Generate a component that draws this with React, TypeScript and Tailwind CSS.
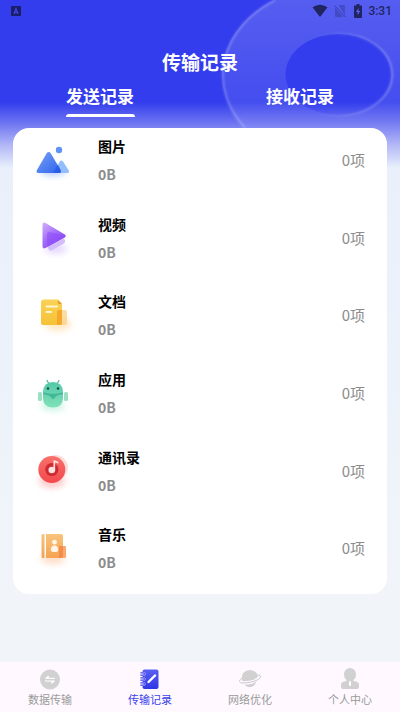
import { useState } from "react";

const ImageIcon = () => (
  <svg viewBox="0 0 48 48" className="size-12 shrink-0" aria-hidden="true">
    <defs>
      <linearGradient id="imgA" x1="0" y1="0" x2="1" y2="1">
        <stop offset="0" stopColor="#79a2f6" />
        <stop offset="1" stopColor="#2c62ec" />
      </linearGradient>
      <filter id="soft" x="-50%" y="-50%" width="200%" height="200%">
        <feGaussianBlur stdDeviation="3" />
      </filter>
    </defs>
    <ellipse cx="24" cy="35" rx="13" ry="5" fill="#5b8cf8" opacity=".4" filter="url(#soft)" />
    <circle cx="30" cy="14" r="3.200" fill="#5f92f6" />
    <path d="M30.800 25.500q1.500-2.200 3.200 0l5.700 9q1 2.500-1.200 2.500H25z" fill="#93bdfb" />
    <path d="M17.500 17.500q2.200-2.800 4.400 0L31.500 34q1.300 3-1.500 3H9.500q-3 0-1.500-3z" fill="url(#imgA)" />
    <path d="M29 28.500l-2.500 4q-2 3-2 4.500H30q2.800 0 1.500-3z" fill="#2458e4" opacity=".65" />
  </svg>
);

const VideoIcon = () => (
  <svg viewBox="0 0 48 48" className="size-12 shrink-0" aria-hidden="true">
    <defs>
      <linearGradient id="vidA" x1="0" y1="0" x2=".7" y2="1">
        <stop offset="0" stopColor="#d0b0fa" />
        <stop offset=".55" stopColor="#a26af8" />
        <stop offset="1" stopColor="#8a4cf7" />
      </linearGradient>
    </defs>
    <ellipse cx="27" cy="35" rx="11" ry="5" fill="#a674fa" opacity=".28" filter="url(#soft)" />
    <path d="M19 33l15-8q2-.5 2 1.500v1q0 1.500-2 2.500L23 36.200q-2.500 1.200-4-2z" fill="#d2bcfc" />
    <path d="M13.500 11q0-3.500 3-2l19 11.300q2.500 1.700 0 3.400L16.500 34q-3 1.500-3-2z" fill="url(#vidA)" />
    <path d="M18 21q0-4 3-2.700L35.500 21q1.500 1 0 2.200L20.500 32q-2.500 1-2.500-2z" fill="#8a45fa" opacity=".5" />
  </svg>
);

const DocumentIcon = () => (
  <svg viewBox="0 0 48 48" className="size-12 shrink-0" aria-hidden="true">
    <defs>
      <linearGradient id="docA" x1="0" y1="0" x2="0" y2="1">
        <stop offset="0" stopColor="#fad257" />
        <stop offset="1" stopColor="#f6c136" />
      </linearGradient>
    </defs>
    <ellipse cx="29" cy="33" rx="13" ry="7" fill="#fdb94d" opacity=".32" filter="url(#soft)" />
    <path d="M15 8.500h14l4 4V32q0 2-2 2H14q-2 0-2-2V11.500q0-3 3-3z" fill="url(#docA)" />
    <path d="M29 9.500l3.500 3.500H31q-2 0-2-2z" fill="#e98918" />
    <rect x="28" y="19" width="10" height="15" rx="2" fill="#fbcf80" opacity=".7" />
    <path d="M30 19h3v13q0 2-2 2h-3V21q0-2 2-2z" fill="#f5a82a" />
    <path d="M17.500 15.500h10.500M17.500 21h4.500" stroke="#fff5cf" strokeWidth="2" strokeLinecap="round" />
  </svg>
);

const AppIcon = () => (
  <svg viewBox="0 0 48 48" className="size-12 shrink-0" aria-hidden="true">
    <defs>
      <linearGradient id="appA" x1="0" y1="0" x2="0" y2="1">
        <stop offset="0" stopColor="#53c7a8" />
        <stop offset="1" stopColor="#80e2b8" />
      </linearGradient>
    </defs>
    <ellipse cx="24" cy="37" rx="12" ry="5" fill="#6fe0b5" opacity=".35" filter="url(#soft)" />
    <path d="M19.500 14l-1.500-2.500M28.500 14l1.500-2.500" stroke="#4fb99a" strokeWidth="1.300" strokeLinecap="round" />
    <rect x="9" y="23" width="4" height="9" rx="1.500" fill="#9cdfc4" />
    <rect x="35" y="23" width="4" height="9" rx="1.500" fill="#9cdfc4" />
    <path d="M14 23q.5-10 10-10t10 10v6q0 9.500-10 9.500T14 29z" fill="url(#appA)" />
    <path d="M14 23.500q10 2.500 20 0V25l-6 1.500-4 4-4-4-6-1.500z" fill="#30ab8b" opacity=".7" />
    <circle cx="19" cy="19.500" r="1.200" fill="#15483e" />
    <circle cx="29" cy="19.500" r="1.200" fill="#15483e" />
  </svg>
);

const DiscIcon = () => (
  <svg viewBox="0 0 48 48" className="size-12 shrink-0" aria-hidden="true">
    <defs>
      <linearGradient id="discA" x1="0" y1="0" x2="0" y2="1">
        <stop offset="0" stopColor="#f8716c" />
        <stop offset="1" stopColor="#f3494c" />
      </linearGradient>
    </defs>
    <ellipse cx="23" cy="34" rx="13" ry="7" fill="#fb6c68" opacity=".35" filter="url(#soft)" />
    <circle cx="26.500" cy="20.500" r="12.500" fill="#fddedd" />
    <circle cx="22.800" cy="22.500" r="13.500" fill="url(#discA)" />
    <circle cx="22.800" cy="22.500" r="6.600" fill="#cf2a31" />
    <circle cx="22.800" cy="23" r="3.300" fill="#ffe3e1" />
    <path d="M25.300 23.500V14l3.500 1.500" stroke="#ffe3e1" strokeWidth="1.700" fill="none" strokeLinejoin="round" strokeLinecap="round" />
  </svg>
);

const ContactIcon = () => (
  <svg viewBox="0 0 48 48" className="size-12 shrink-0" aria-hidden="true">
    <defs>
      <linearGradient id="conA" x1="0" y1="0" x2="0" y2="1">
        <stop offset="0" stopColor="#f8c47d" />
        <stop offset="1" stopColor="#f5a351" />
      </linearGradient>
    </defs>
    <ellipse cx="24" cy="35" rx="12" ry="5" fill="#fa9e5b" opacity=".35" filter="url(#soft)" />
    <path d="M14 10h1.500v24H14q-1.500 0-1.500-1.500v-21Q12.500 10 14 10z" fill="url(#conA)" />
    <path d="M17 10h15q2 0 2 2v20q0 2-2 2H17z" fill="url(#conA)" />
    <circle cx="25.500" cy="18.200" r="2.400" fill="#fff4e6" />
    <path d="M21.800 26q0-4.500 3.700-4.500t3.700 4.500q0 2-3.700 2t-3.700-2z" fill="#fff4e6" />
    <rect x="30" y="22" width="7" height="12" rx="1" fill="#f9aa72" />
    <path d="M30 22h4v10q0 2-2 2h-2z" fill="#f58c4a" />
  </svg>
);

const RECORDS = [
  { name: "图片", icon: ImageIcon },
  { name: "视频", icon: VideoIcon },
  { name: "文档", icon: DocumentIcon },
  { name: "应用", icon: AppIcon },
  { name: "通讯录", icon: DiscIcon },
  { name: "音乐", icon: ContactIcon },
];

const TransferIcon = () => (
  <svg viewBox="0 0 24 24" className="size-6" aria-hidden="true">
    <circle cx="12" cy="12.500" r="10" fill="#d1d1d1" />
    <path d="M17 11.300H7.500L10.300 9v2M7 14h9.500l-2.800 2.300v-2" fill="#fff" stroke="#fff" strokeWidth="1" strokeLinejoin="round" />
  </svg>
);

const NotebookIcon = () => (
  <svg viewBox="0 0 24 24" className="size-6" aria-hidden="true">
    <defs>
      <linearGradient id="noteA" x1="0" y1="0" x2="0" y2="1">
        <stop offset="0" stopColor="#5a5ff2" />
        <stop offset="1" stopColor="#3036e6" />
      </linearGradient>
    </defs>
    <rect x="4.500" y="2.500" width="16" height="19.500" rx="2" fill="url(#noteA)" />
    {[7, 12, 17].map((y) => (
      <g key={y}>
        <rect x="1.500" y={y - 1.8} width="6" height="3.600" rx="1.800" fill="#fff9ff" />
        <path d={`M2.800 ${y - 1.2}h2.400q1.200 0 1.200 1.200t-1.200 1.200H2.800`} fill="none" stroke="#4549ec" strokeWidth="1.200" strokeLinecap="round" />
      </g>
    ))}
    <path d="M10.500 15l6.500-6.500" stroke="#fff" strokeWidth="2.400" strokeLinecap="round" />
  </svg>
);

const PlanetIcon = () => (
  <svg viewBox="0 0 24 24" className="size-6" aria-hidden="true">
    <path d="M4.200 14q-1.800-10.500 7.800-11 6.800.3 8 6.500-1.500 2.500-7.500 4-5.500 1.300-8.300.5z" fill="#d1d1d1" />
    <path d="M6.300 17.700q8-.2 12.200-3.400-2.200 6-7 5.900-3-.2-5.200-2.500z" fill="#d1d1d1" />
    <path d="M20.300 8q2.400 0 2.400 1.500 0 3-8.700 5.300-12.500 2.800-12.500-.5 0-1.500 2.200-3" fill="none" stroke="#c8c8c8" strokeWidth="1" strokeLinecap="round" />
  </svg>
);

const PersonIcon = () => (
  <svg viewBox="0 0 24 24" className="size-6" aria-hidden="true">
    <path d="M12 1a6 6 0 0 1 6 6.500q0 3.500-2.500 5.500l.2 1 3 .7q2.300.8 2.300 2.800V20q0 2-2 2H5q-2 0-2-2v-2.500q0-2 2.300-2.800l3-.7.2-1Q6 11 6 7.500A6 6 0 0 1 12 1z" fill="#d1d1d1" />
    <path d="M11.300 14h1.400l.5 4-1.200 1.200-1.200-1.200z" fill="#fff" />
  </svg>
);

const NAV_ITEMS = [
  { label: "数据传输", icon: TransferIcon },
  { label: "传输记录", icon: NotebookIcon },
  { label: "网络优化", icon: PlanetIcon },
  { label: "个人中心", icon: PersonIcon },
];

function StatusBar() {
  return (
    <div className="flex h-[22px] items-center justify-between pr-2 pl-[11px] text-[#20255f]">
      <svg viewBox="0 0 10 10" className="size-2.5" aria-hidden="true">
        <rect width="10" height="10" rx="1" fill="#1b1f66" />
        <path d="M3 8l2-5.500L7 8M3.800 6.300h2.400" stroke="#3b45e8" strokeWidth="1.200" fill="none" />
      </svg>
      <div className="flex items-center">
        <svg viewBox="0 0 16 14" className="mr-1.5 h-3.5 w-4" aria-hidden="true">
          <path d="M8 13L.5 3.300Q8-2 15.500 3.300z" fill="currentColor" />
        </svg>
        <svg viewBox="0 0 12 14" className="mr-2 h-3.5 w-3" aria-hidden="true">
          <path d="M4.500 1H11v10zM1 3.500L9.500 13H2q-1 0-1-1z" fill="currentColor" opacity=".3" />
          <path d="M.5 1.500l11 11.500" stroke="currentColor" strokeWidth="1" opacity=".5" />
        </svg>
        <svg viewBox="0 0 8 14" className="mr-1.5 h-3.5 w-2" aria-hidden="true">
          <path d="M2.500 0h3v1.500H8V13q0 1-1 1H1q-1 0-1-1V1.500h2.500z" fill="currentColor" />
          <path d="M4.600 4L2 8h1.600v3.200L6.200 7H4.600z" fill="#5a62f2" />
        </svg>
        <span className="font-[Roboto,sans-serif] text-xs font-medium">3:31</span>
      </div>
    </div>
  );
}

function HeaderRings() {
  return (
    <svg viewBox="0 0 180 170" className="absolute top-0 right-0 h-[170px] w-[180px]" aria-hidden="true">
      <defs>
        <linearGradient id="ringFill" x1="0" y1="0" x2="0" y2="1">
          <stop offset="0" stopColor="#fff" stopOpacity=".18" />
          <stop offset=".7" stopColor="#fff" stopOpacity=".08" />
          <stop offset="1" stopColor="#fff" stopOpacity="0" />
        </linearGradient>
        <linearGradient id="ringEdge" x1="0" y1="0" x2="1" y2="0">
          <stop offset=".3" stopColor="#fff" stopOpacity="0" />
          <stop offset="1" stopColor="#fff" stopOpacity=".28" />
        </linearGradient>
        <filter id="edgeBlur">
          <feGaussianBlur stdDeviation=".8" />
        </filter>
      </defs>
      <path
        d="M2 75a116 90 0 1 0 232 0a116 90 0 1 0-232 0zM65.500 74.500a53 40.500 0 1 0 106 0a53 40.500 0 1 0-106 0z"
        fillRule="evenodd"
        fill="url(#ringFill)"
      />
      <path d="M55 0A116 90 0 0 0 25 128" fill="none" stroke="#fff" strokeWidth="2" opacity=".24" filter="url(#edgeBlur)" />
      <ellipse cx="118.500" cy="74.500" rx="53.500" ry="41" fill="none" stroke="url(#ringEdge)" strokeWidth="2" filter="url(#edgeBlur)" />
    </svg>
  );
}

export default function App() {
  const [tab, setTab] = useState("发送记录");

  return (
    <div className="relative flex min-h-screen flex-col bg-[linear-gradient(180deg,#333ded_0px,#333ded_102px,#6a71f1_122px,#b1b7f6_145px,#e9f0fb_168px,#f1f5fa_600px)] font-['Noto_Sans_CJK_SC',sans-serif]">
      <HeaderRings />
      <header className="relative flex h-32 flex-col text-white">
        <StatusBar />
        <h1 className="mt-6 text-center text-[19px] leading-8 font-bold">传输记录</h1>
        <div className="grid grid-cols-2" role="tablist">
          {["发送记录", "接收记录"].map((name) => (
            <button
              key={name}
              role="tab"
              aria-selected={tab === name}
              onClick={() => setTab(name)}
              className="flex flex-col items-center text-[17px] leading-9 font-bold"
            >
              {name}
              <span className={`h-[3px] w-[69px] rounded-t-sm ${tab === name ? "bg-white" : "bg-transparent"}`} />
            </button>
          ))}
        </div>
      </header>

      <main className="relative mx-[13px] mb-[68px] flex flex-1 flex-col rounded-2xl bg-white">
        {RECORDS.map(({ name, icon: Icon }) => (
          <div key={name} className="flex flex-1 items-start pr-[22px] pl-4">
            <div className="pt-2">
              <Icon />
            </div>
            <div className="ml-[21px] flex-1 pt-1.5">
              <h2 className="text-sm leading-6 font-bold text-black">{name}</h2>
              <p className="mt-1 text-sm leading-6 font-bold text-[#8c8c8c]">0B</p>
            </div>
            <span className="pt-5 text-[15px] leading-6 text-[#8c8c8c]">0项</span>
          </div>
        ))}
      </main>

      <nav className="grid grid-cols-4 bg-[#fff9ff] py-[5px]">
        {NAV_ITEMS.map(({ label, icon: Icon }) => (
          <a
            key={label}
            href="#"
            className={`flex flex-col items-center text-[11px] leading-4 ${label === "传输记录" ? "text-[#3b42e8]" : "text-[#999999]"}`}
          >
            <Icon />
            {label}
          </a>
        ))}
      </nav>
    </div>
  );
}
